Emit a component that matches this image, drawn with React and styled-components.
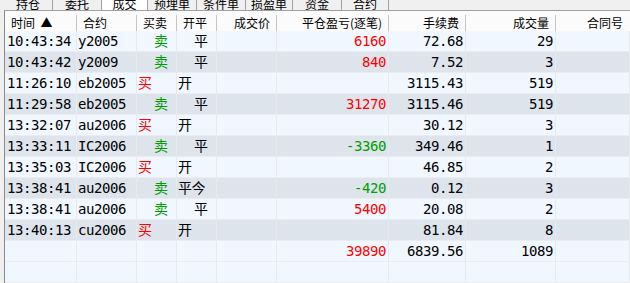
import React from 'react';
import styled, { createGlobalStyle } from 'styled-components';

const GlobalStyle = createGlobalStyle`
  html, body {
    margin: 0;
    padding: 0;
    background: #f0f0f0;
    overflow: hidden;
  }
`;

const tabs = [
  { label: '持仓', width: 49 },
  { label: '委托', width: 49 },
  { label: '成交', width: 46, active: true },
  { label: '预埋单', width: 49 },
  { label: '条件单', width: 49 },
  { label: '损盈单', width: 47 },
  { label: '资金', width: 49 },
  { label: '合约', width: 47 },
];

const columns = [
  { title: '时间\u00a0\u00a0▲', width: '72px', align: 'left' },
  { title: '合约', width: '60px', align: 'left' },
  { title: '买卖', width: '40px', align: 'left' },
  { title: '开平', width: '40px', align: 'left' },
  { title: '成交价', width: '60px', align: 'right' },
  { title: '平仓盈亏(逐笔)', width: '112px', align: 'right' },
  { title: '手续费', width: '77px', align: 'right' },
  { title: '成交量', width: '90px', align: 'right' },
  { title: '合同号', width: '1fr', align: 'right' },
];

const trades = [
  ['10:43:34', 'y2005', 'sell', '平', '6160', '72.68', '29'],
  ['10:43:42', 'y2009', 'sell', '平', '840', '7.52', '3'],
  ['11:26:10', 'eb2005', 'buy', '开', '', '3115.43', '519'],
  ['11:29:58', 'eb2005', 'sell', '平', '31270', '3115.46', '519'],
  ['13:32:07', 'au2006', 'buy', '开', '', '30.12', '3'],
  ['13:33:11', 'IC2006', 'sell', '平', '-3360', '349.46', '1'],
  ['13:35:03', 'IC2006', 'buy', '开', '', '46.85', '2'],
  ['13:38:41', 'au2006', 'sell', '平今', '-420', '0.12', '3'],
  ['13:38:41', 'au2006', 'sell', '平', '5400', '20.08', '2'],
  ['13:40:13', 'cu2006', 'buy', '开', '', '81.84', '8'],
];

const gridTemplate = columns.map((c) => c.width).join(' ');

const Page = styled.div`
  width: 630px;
  height: 283px;
  overflow: hidden;
  display: flex;
  flex-direction: column;
  background: #f0f0f0;
`;

const TabStrip = styled.div`
  display: flex;
  height: 10px;
  padding-left: 4px;
  overflow: hidden;
`;

const Tab = styled.div`
  width: ${(p) => p.$width}px;
  height: 10px;
  box-sizing: border-box;
  border-right: 1px solid #a0a0a0;
  background: ${(p) => (p.$active ? '#ffffff' : '#f0f0f0')};
  display: flex;
  align-items: flex-end;
  justify-content: center;
  font: 12px/12px "Noto Sans CJK SC", sans-serif;
  color: #000;
  white-space: nowrap;
`;

const Table = styled.div`
  flex: 1;
  margin-left: 4px;
  border-left: 1px solid #8a8a8a;
  border-top: 1px solid #a0a0a0;
  background: #f0f7fe;
  display: flex;
  flex-direction: column;
  overflow: hidden;
`;

const HeaderRow = styled.div`
  display: grid;
  grid-template-columns: ${gridTemplate};
  height: 23px;
  box-sizing: border-box;
  padding-top: 4px;
  background: #fbfbfb;
`;

const HeaderCell = styled.div`
  box-sizing: border-box;
  border-right: 1px solid ${(p) => (p.$last ? 'transparent' : '#c4c4c4')};
  padding: 0 6px;
  text-align: ${(p) => p.$align};
  font: 12px/16px "Noto Sans CJK SC", sans-serif;
  color: #000;
  white-space: nowrap;
  overflow: hidden;
`;

const Row = styled.div`
  display: grid;
  grid-template-columns: ${gridTemplate};
  height: 21px;
  box-sizing: border-box;
  border-bottom: 1px solid #e9edf2;
  background: ${(p) => (p.$alt ? '#dde4ec' : '#f0f7fe')};
`;

const Cell = styled.div`
  box-sizing: border-box;
  border-right: 1px solid #e6e9ee;
  height: 20px;
  overflow: hidden;
  white-space: nowrap;
  text-align: ${(p) => p.$align || 'left'};
  padding-left: ${(p) => p.$indent ?? 1}px;
  padding-right: 2px;
  font-family: "DejaVu Sans Mono", "Noto Sans CJK SC", monospace;
  font-size: 14px;
  letter-spacing: -0.43px;
  line-height: 20px;
  color: ${(p) => p.$color || '#000'};
`;

const RED = '#ff0000';
const GREEN = '#009c00';

const pnlColor = (v) => (v.startsWith('-') ? GREEN : RED);

const TradeRow = ({ trade, alt }) => {
  const [time, code, side, offset, pnl, fee, qty] = trade;
  const isBuy = side === 'buy';
  return (
    <Row $alt={alt}>
      <Cell $indent={2}>{time}</Cell>
      <Cell>{code}</Cell>
      <Cell $indent={isBuy ? 1 : 17} $color={isBuy ? RED : GREEN}>
        {isBuy ? '买' : '卖'}
      </Cell>
      <Cell $indent={offset === '平' ? 17 : 1}>{offset}</Cell>
      <Cell />
      <Cell $align="right" $color={pnl ? pnlColor(pnl) : undefined}>{pnl}</Cell>
      <Cell $align="right">{fee}</Cell>
      <Cell $align="right">{qty}</Cell>
      <Cell />
    </Row>
  );
};

export default function App() {
  return (
    <>
      <GlobalStyle />
      <Page>
        <TabStrip>
          {tabs.map((t) => (
            <Tab key={t.label} $width={t.width} $active={t.active}>
              {t.label}
            </Tab>
          ))}
        </TabStrip>
        <Table>
          <HeaderRow>
            {columns.map((c, i) => (
              <HeaderCell key={c.title} $align={c.align} $last={i === columns.length - 1}>
                {c.title}
              </HeaderCell>
            ))}
          </HeaderRow>
          {trades.map((t, i) => (
            <TradeRow key={i} trade={t} alt={i % 2 === 1} />
          ))}
          <Row>
            <Cell />
            <Cell />
            <Cell />
            <Cell />
            <Cell />
            <Cell $align="right" $color={RED}>39890</Cell>
            <Cell $align="right">6839.56</Cell>
            <Cell $align="right">1089</Cell>
            <Cell />
          </Row>
          <Row>
            {columns.map((c) => (
              <Cell key={c.title} />
            ))}
          </Row>
        </Table>
      </Page>
    </>
  );
}
